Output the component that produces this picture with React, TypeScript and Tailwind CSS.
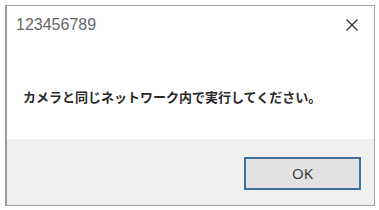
import React from "react";

export default function App() {
  return (
    <div className="w-[379px] h-[210px] bg-white pl-[5px] pr-[4px] pt-[5px] pb-[4px]">
      <div className="w-full h-full border border-[#a3a3a3] border-l-[2px] border-l-[#9c9c9c] flex flex-col bg-white">
        <div className="flex-1 flex flex-col">
          <div className="h-[36px] flex items-center justify-between pl-[9px] pr-[12px] pt-[1px]">
            <span className="text-[16px] text-[#666666] leading-none" style={{ fontFamily: '"Liberation Sans", Arial, sans-serif' }}>
              123456789
            </span>
            <svg width="14" height="14" viewBox="0 0 14 14" className="mr-[3px]">
              <path d="M1.5 1.5 L12.5 12.5 M12.5 1.5 L1.5 12.5" stroke="#3a3a3a" strokeWidth="1.4" fill="none" />
            </svg>
          </div>
          <div className="flex-1 flex items-center pl-[16px] pt-[11px]">
            <span className="text-[13px] font-semibold text-[#2a2a2a] leading-none" style={{ fontFamily: '"Noto Sans CJK JP", "Noto Sans", sans-serif' }}>
              カメラと同じネットワーク内で実行してください。
            </span>
          </div>
        </div>
        <div className="h-[66px] bg-[#f0f0f0] flex justify-end items-start pt-[18px] pr-[13px]">
          <button className="w-[117px] h-[33px] border-2 border-[#3f719f] bg-[#e2e2e2] flex items-center justify-center text-[15px] font-medium text-[#333333]" style={{ fontFamily: '"Open Sans", "Liberation Sans", sans-serif' }}>
            OK
          </button>
        </div>
      </div>
    </div>
  );
}
